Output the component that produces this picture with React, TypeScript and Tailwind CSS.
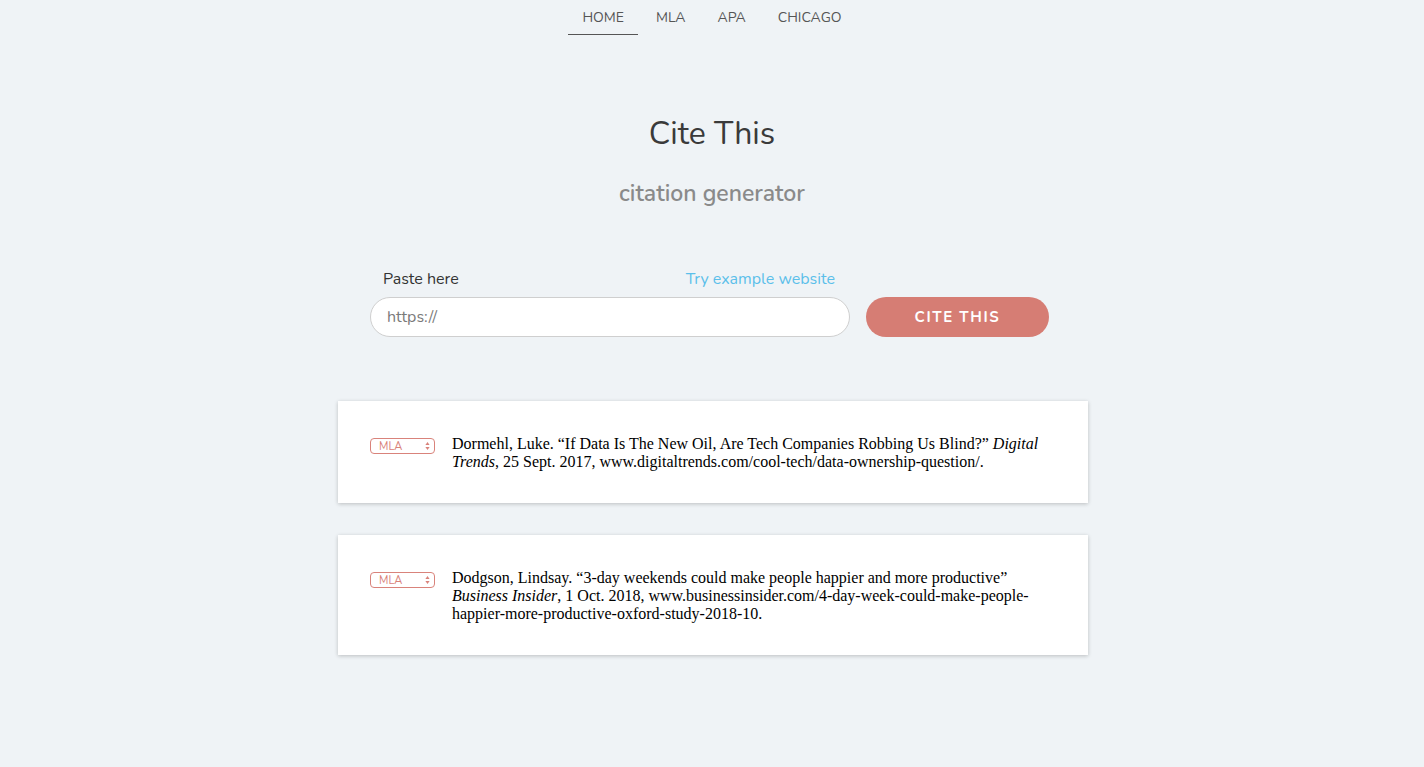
import { useState } from "react";

type Citation = {
  id: number;
  before: string;
  source: string;
  after: string;
};

const citations: Citation[] = [
  {
    id: 1,
    before:
      "Dormehl, Luke. \u201CIf Data Is The New Oil, Are Tech Companies Robbing Us Blind?\u201D ",
    source: "Digital Trends",
    after: ", 25 Sept. 2017, www.digitaltrends.com/cool-tech/data-ownership-question/.",
  },
  {
    id: 2,
    before:
      "Dodgson, Lindsay. \u201C3-day weekends could make people happier and more productive\u201D ",
    source: "Business Insider",
    after:
      ", 1 Oct. 2018, www.businessinsider.com/4-day-week-could-make-people-happier-more-productive-oxford-study-2018-10.",
  },
];

const navItems = ["HOME", "MLA", "APA", "CHICAGO"];

function StyleSelect() {
  return (
    <div className="relative mt-[3px] flex h-4 w-[65px] shrink-0 items-center rounded-[4px] border border-[#d9837b] bg-white pl-2 text-[11px] leading-none text-[#d9837b]">
      MLA
      <svg
        className="absolute right-[4px] top-1/2 -translate-y-1/2"
        width="5"
        height="9"
        viewBox="0 0 5 9"
        fill="#d9837b"
      >
        <path d="M2.5 0.5 L4.6 3.6 H0.4 Z" />
        <path d="M2.5 8.5 L4.6 5.4 H0.4 Z" />
      </svg>
    </div>
  );
}

export default function App() {
  const [url, setUrl] = useState("");

  return (
    <div className="min-h-[767px] bg-[#eff3f6] font-['Nunito','Lato',sans-serif] text-[#3b3b3b]">
      <nav className="flex justify-center gap-[4px] pt-[9px]">
        {navItems.map((item, i) => (
          <a
            key={item}
            className={
              i === 0
                ? "border-b border-[#555] px-[14px] pb-[7px] text-[14px] leading-[18px] text-[#555]"
                : "px-[14px] pb-[7px] text-[14px] leading-[18px] text-[#555]"
            }
          >
            {item}
          </a>
        ))}
      </nav>

      <header className="mt-[79px] text-center">
        <h1 className="text-[32px] leading-[40px] text-[#3a3a3a]">Cite This</h1>
        <h2 className="mt-[26px] text-[23px] font-semibold leading-[28px] text-[#8a8a8a]">
          citation generator
        </h2>
      </header>

      <section className="mx-auto mt-[61px] flex w-[684px] items-end gap-4 pr-[5px]">
        <div className="w-[480px]">
          <div className="mb-[8px] flex items-center justify-between pl-[13px] pr-[15px] text-[16px] leading-[20px]">
            <span className="text-[#333]">Paste here</span>
            <span className="text-[#5bbfea]">Try example website</span>
          </div>
          <input
            value={url}
            onChange={(e) => setUrl(e.target.value)}
            placeholder="https://"
            className="h-10 w-full rounded-full border border-[#cfcfcf] bg-white px-4 text-[16px] text-[#333] outline-none placeholder:text-[#7a7a7a]"
          />
        </div>
        <button className="h-10 w-[183px] rounded-full bg-[#d67d74] text-[15px] font-bold tracking-[1.6px] text-white">
          CITE THIS
        </button>
      </section>

      <main className="mx-auto mt-16 flex w-[750px] translate-x-[1px] flex-col gap-8 pb-[110px]">
        {citations.map((c) => (
          <div
            key={c.id}
            className="flex gap-[17px] bg-white pb-8 pl-8 pr-8 pt-[34px] shadow-[0_1px_4px_rgba(0,0,0,0.22)]"
          >
            <StyleSelect />
            <p className="w-[604px] font-['Liberation_Serif',serif] text-[16px] leading-[18px] text-black">
              {c.before}
              <i>{c.source}</i>
              {c.after}
            </p>
          </div>
        ))}
      </main>
    </div>
  );
}
